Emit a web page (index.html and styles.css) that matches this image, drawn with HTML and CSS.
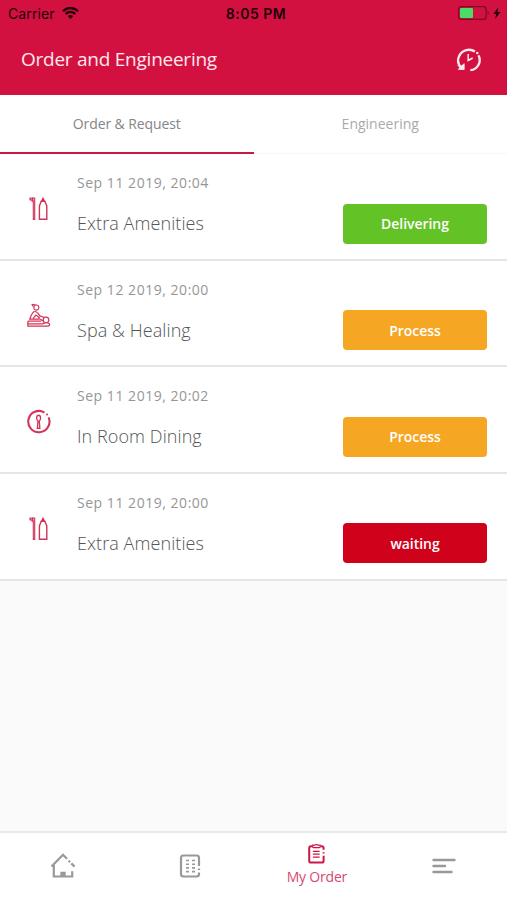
FILE: index.html
```html
<!DOCTYPE html>
<html lang="en">
<head>
<meta charset="utf-8">
<title>Order and Engineering</title>
<link rel="stylesheet" href="styles.css">
</head>
<body>
<svg class="defs" width="0" height="0" aria-hidden="true">
  <symbol id="amenities" viewBox="0 0 25 25">
    <path d="M4.200 1.500v3M6.400 1.500v4" stroke-width="1.500"/>
    <path d="M6 2h2.700v21.500H7.300V5H6z" fill="currentColor" fill-opacity=".35" stroke-width="1.100"/>
    <path d="M15.200 5.300h3.600l2 4.700v13.300h-7.400V10z" stroke-width="1.400"/>
    <path d="M15.700 4.900l1.300-2.800 1.300 2.800z" fill="currentColor" stroke-width="1.200"/>
  </symbol>
  <symbol id="spa" viewBox="0 0 24 24">
    <path d="M7.600 5.200c-.4-2.400.8-3.400 2.400-3.300 1.800.1 2.800 1.600 2.100 3.500-.5 1.800-3.600 2.100-4.500-.2zM6.800 3.200L5.900 1.600l2.300-.4"/>
    <path d="M7.800 8.200C5.800 9.400 4.800 12 3.600 15.400h8.600M8 8.200c3-.5 4 2.300 5.300 4.200l4.500 1.500M6.800 14.700l2.700-3.100 3.700 2.700"/>
    <circle cx="19.200" cy="16.300" r="2.700"/>
    <path d="M11.600 15.200c2.400-.5 3.500 1.200 5.100 2.200M1.800 17.500h12.800M1.800 17.500v4.700h18.600c3.200 0 2.800-3 .2-2.900M2 20h13.900l2.500-1.100" stroke-width="1.200"/>
  </symbol>
  <symbol id="dining" viewBox="0 0 24 24">
    <path d="M17.700 3.400A10.200 10.200 0 1 0 21.700 8" stroke-width="2"/>
    <circle cx="20.200" cy="5.300" r="1" fill="currentColor" stroke="none"/>
    <path d="M11.500 11.500C9.600 10.300 9.800 6 12.100 6s2.500 4.300.6 5.500l.6 7h-2.400z" stroke-width="1.300"/>
  </symbol>
</svg>
<div class="app">
  <header>
    <div class="status">
      <div class="carrier"><span>Carrier</span>
        <svg width="17" height="12" viewBox="0 0 17 12"><path d="M1 4.200C5-.1 12-.1 16 4.200M3.700 7c2.800-2.700 6.800-2.700 9.600 0" fill="none" stroke="currentColor" stroke-width="2.400"/><path d="M5.800 9.100c1.500-1.500 3.900-1.500 5.400 0L8.500 12z" fill="currentColor"/></svg>
      </div>
      <div class="clock">8:05 PM</div>
      <svg class="battery" width="43" height="14" viewBox="0 0 43 14"><rect x=".6" y=".6" width="27.600" height="12.800" rx="3" fill="none" stroke="#760b29" stroke-width="1.100"/><rect x="2" y="2" width="13" height="10" rx="1.200" fill="#4cdb66"/><path d="M29.700 5v4c1.400-.7 1.400-3.300 0-4z" fill="#760b29"/><path d="M40.400 1.300L35.300 8h3l-1.300 5 5.600-7.100h-3.200z" fill="currentColor"/></svg>
    </div>
    <div class="titlebar"><h1>Order and Engineering</h1>
      <svg class="history" width="26" height="26" viewBox="0 0 26 26" fill="none" stroke="currentColor"><path d="M5.200 20.500C1.900 17.100 1.300 12.800 3.200 8.900 6.300 2.900 13.400 1 19 4.500M22.500 8.200c3.400 6.900-.9 14.300-8.100 15" stroke-width="2.300"/><circle cx="21.300" cy="6" r="1.200" fill="currentColor" stroke="none"/><path d="M2.500 22.500h5.700v-5.800l-2.600 2.100-3.800-.6 2 2z" fill="currentColor" stroke-width=".8"/><path d="M12.200 7v6.500l4.500-2.500" stroke-width="1.500"/></svg>
    </div>
  </header>
  <nav class="tabs"><div class="tab selected"><span>Order &amp; Request</span></div><div class="tab"><span>Engineering</span></div></nav>
  <main>
    <article><svg class="row-icon"><use href="#amenities"/></svg><div class="details"><time>Sep 11 2019, 20:04</time><h2>Extra Amenities</h2></div><div class="badge green">Delivering</div></article>
    <article><svg class="row-icon"><use href="#spa"/></svg><div class="details"><time>Sep 12 2019, 20:00</time><h2>Spa &amp; Healing</h2></div><div class="badge orange">Process</div></article>
    <article><svg class="row-icon"><use href="#dining"/></svg><div class="details"><time>Sep 11 2019, 20:02</time><h2>In Room Dining</h2></div><div class="badge orange">Process</div></article>
    <article><svg class="row-icon"><use href="#amenities"/></svg><div class="details"><time>Sep 11 2019, 20:00</time><h2>Extra Amenities</h2></div><div class="badge red">waiting</div></article>
  </main>
  <footer>
    <div class="nav-item"><svg width="26" height="26" viewBox="0 0 26 26"><path d="M1.500 13.500L13 1.700l4 4M18.700 7.700l1.400 1.400M21.300 10.400l3.200 3.200M3.800 12v11.500h18.400v-5.300" stroke-width="2.200"/><path d="M11 23v-3.700h4V23" fill="currentColor" stroke-width="1.300"/></svg></div>
    <div class="nav-item"><svg width="22" height="24" viewBox="0 0 22 24"><path d="M20 12V4q0-2.500-2.500-2.500h-13Q2 1.500 2 4v16q0 2.500 2.500 2.500h13Q20 22.500 20 20v-1.500M20 14.500v1.500" stroke-width="2.200"/><path d="M7 6.500h3M13 6.500h3M7 10.200h3M13 10.200h3M7 13.900h3M13 13.900h3M7 17.600h3M13 17.600h3" stroke-width="1.600"/></svg></div>
    <div class="nav-item active"><svg width="17" height="20" viewBox="0 0 17 20"><path d="M4.300 2.300H3Q1.200 2.300 1.200 4.200v12.500q0 1.900 1.900 1.900h10.600q1.900 0 1.900-1.900v-5M12.700 2.300h1q1.900 0 1.900 1.900v1.600M15.600 8.200v1.200" stroke-width="2"/><path d="M4.700 1.200h1.700q2-1 4 0h1.800v1.500q0 1-1 1H5.700q-1 0-1-1z" stroke-width="1.200"/><path d="M4.900 7.300h6.800M4.900 10.200h6.800M4.900 13.100h6.800" stroke-width="1.200"/></svg><span>My Order</span></div>
    <div class="nav-item"><svg width="24" height="18" viewBox="0 0 24 18"><path d="M1.500 3h21M1.500 9h11.500M1.500 15h18" stroke-width="2.400" stroke-linecap="round"/></svg></div>
  </footer>
</div>
</body>
</html>
```
FILE: styles.css
```css
* { box-sizing: border-box; }
body { margin: 0; background: #fafafa; font-family: "Open Sans", "Noto Sans", sans-serif; }
h1, h2 { margin: 0; font-weight: 300; }
svg { display: block; flex: none; }
.defs { display: none; }
.app { height: 900px; display: flex; flex-direction: column; }
header { height: 95px; background: #d31140; flex: none; }
.status { height: 26px; padding: 0 6px 0 8px; display: grid; grid-template-columns: 1fr auto 1fr; align-items: center; color: #210009; font-family: Inter, sans-serif; }
.carrier { display: flex; align-items: center; gap: 7px; font-size: 14px; letter-spacing: .1px; }
.clock { font-size: 14px; font-weight: 600; letter-spacing: .5px; padding-left: 3px; }
.battery { justify-self: end; }
.titlebar { height: 69px; display: flex; align-items: center; justify-content: space-between; padding: 0 25px 2px 21px; color: #ffe8ef; }
h1 { font-size: 19px; font-weight: 400; line-height: 28px; letter-spacing: -.25px; padding-bottom: 1px; }
.tabs { height: 59px; display: grid; grid-template-columns: 1fr 1fr; background: #fff; flex: none; }
.tab { display: flex; align-items: center; justify-content: center; border-bottom: 1px solid #f6f6f6; color: #aaa; font-size: 14px; }
.tab:not(.selected) { padding-bottom: 1px; }
.selected { border-bottom: 2px solid #cc1746; color: #858585; letter-spacing: -.1px; }
article { height: 106.65px; display: flex; padding: 0 20px 0 26px; background: #fff; border-bottom: 2px solid #e5e5e5; }
.row-icon { width: 25px; height: 25px; margin-top: 42px; color: #d33359; fill: none; stroke: currentColor; stroke-width: 1.15; }
.details { margin-left: 26px; padding-top: 18px; flex: 1; }
time { display: block; font-size: 14px; line-height: 22px; letter-spacing: .53px; color: #969696; }
h2 { margin-top: 16px; font-size: 18px; line-height: 26px; letter-spacing: .08px; color: #555; }
.badge { width: 144px; height: 40px; margin-top: 49.5px; border-radius: 4px; display: flex; align-items: center; justify-content: center; color: #fff; font-size: 14px; font-weight: 600; letter-spacing: -.05px; }
.green { background: #63c225; }
.orange { background: #f5a623; }
.red { background: #d0021b; }
footer { margin-top: auto; height: 69px; background: #fff; border-top: 2px solid #e9e9e9; display: grid; grid-template-columns: repeat(4, 1fr); padding-bottom: 2px; }
.nav-item { display: flex; flex-direction: column; align-items: center; justify-content: center; color: #999; }
.nav-item svg { fill: none; stroke: currentColor; }
.active { color: #cc1748; font-size: 14px; line-height: 20px; }
.active span { margin-top: 3px; color: #d84970; letter-spacing: -.2px; }
```
